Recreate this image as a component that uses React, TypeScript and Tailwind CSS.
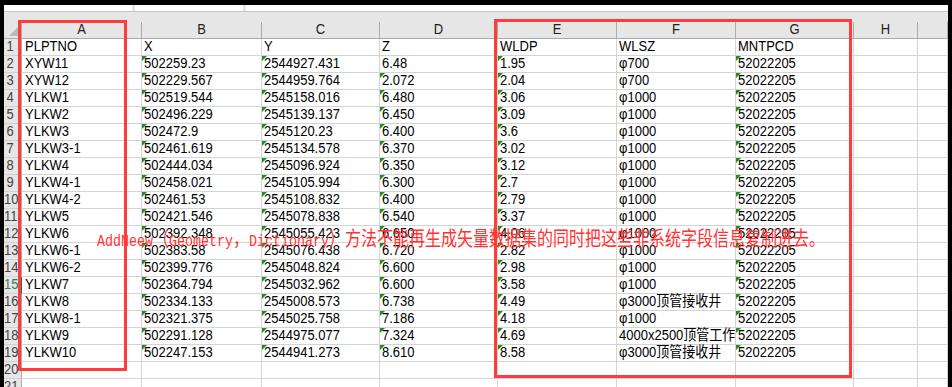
import React from 'react'

// sheet columns, A..H plus the clipped one at the right edge
const COLS = ['A', 'B', 'C', 'D', 'E', 'F', 'G', 'H', '']

const HEAD = ['PLPTNO', 'X', 'Y', 'Z', 'WLDP', 'WLSZ', 'MNTPCD']

const DATA: string[][] = [
  ['XYW11', '502259.23', '2544927.431', '6.48', '1.95', 'φ700', '52022205'],
  ['XYW12', '502229.567', '2544959.764', '2.072', '2.04', 'φ700', '52022205'],
  ['YLKW1', '502519.544', '2545158.016', '6.480', '3.06', 'φ1000', '52022205'],
  ['YLKW2', '502496.229', '2545139.137', '6.450', '3.09', 'φ1000', '52022205'],
  ['YLKW3', '502472.9', '2545120.23', '6.400', '3.6', 'φ1000', '52022205'],
  ['YLKW3-1', '502461.619', '2545134.578', '6.370', '3.02', 'φ1000', '52022205'],
  ['YLKW4', '502444.034', '2545096.924', '6.350', '3.12', 'φ1000', '52022205'],
  ['YLKW4-1', '502458.021', '2545105.994', '6.300', '2.7', 'φ1000', '52022205'],
  ['YLKW4-2', '502461.53', '2545108.832', '6.400', '2.79', 'φ1000', '52022205'],
  ['YLKW5', '502421.546', '2545078.838', '6.540', '3.37', 'φ1000', '52022205'],
  ['YLKW6', '502392.348', '2545055.423', '6.650', '4.06', 'φ1000', '52022205'],
  ['YLKW6-1', '502383.58', '2545076.438', '6.720', '2.82', 'φ1000', '52022205'],
  ['YLKW6-2', '502399.776', '2545048.824', '6.600', '2.98', 'φ1000', '52022205'],
  ['YLKW7', '502364.794', '2545032.962', '6.600', '3.58', 'φ1000', '52022205'],
  ['YLKW8', '502334.133', '2545008.573', '6.738', '4.49', 'φ3000顶管接收井', '52022205'],
  ['YLKW8-1', '502321.375', '2545025.758', '7.186', '4.18', 'φ1000', '52022205'],
  ['YLKW9', '502291.128', '2544975.077', '7.324', '4.69', '4000x2500顶管工作井', '52022205'],
  ['YLKW10', '502247.153', '2544941.273', '8.610', '8.58', 'φ3000顶管接收井', '52022205'],
]

const GRID = 'grid shrink-0 grid-cols-[18px_120px_120px_118px_118px_119px_119px_118px_64px_1fr]'

// numbers stored as text get the little green corner
const hasFlag = (row: number, col: number) => {
  if (row < 2 || row > 19) return false
  if (col === 1 || col === 2 || col === 4 || col === 6) return true
  if (col === 3) return row > 2
  return false
}

function Cell({ text, flag, col }: { text: string; flag: boolean; col: number }) {
  // only the long WLSZ value runs into the next filled cell and gets cut
  const clip = col === 5 && text.length > 12
  return (
    <div
      className={`relative h-[17px] whitespace-nowrap border-r border-b border-[#d4d4d4] bg-white text-black ${
        clip ? 'overflow-x-clip' : ''
      }`}
    >
      {flag && (
        <span className="absolute left-0 top-0 h-[5px] w-[5px] bg-[#1f8f1f] [clip-path:polygon(0_0,100%_0,0_100%)]" />
      )}
      <span className={`block origin-bottom scale-y-[1.12] leading-[16px] ${col === 0 ? 'pl-[3px]' : 'pl-[2px]'}`}>
        {text}
      </span>
    </div>
  )
}

function RowHead({ n }: { n: number }) {
  const active = n === 15
  return (
    <div
      className={`h-[17px] border-b border-[#d0d0d0] bg-[#e6e6e6] pr-[5px] text-center ${
        active ? 'border-r-2 border-r-[#217346] text-[#3a7a52]' : 'border-r border-r-[#ababab] text-[#444]'
      }`}
    >
      <span className="block origin-bottom scale-y-[1.12] leading-[16px]">{n}</span>
    </div>
  )
}

export default function App() {
  const rows: string[][] = [HEAD, ...DATA, [], []]

  return (
    <div className="relative h-[387px] w-[952px] overflow-hidden bg-black px-[4px] pt-[5px] font-['Liberation_Sans','Noto_Sans_CJK_SC',sans-serif] text-[13px]">
      <div className="flex h-full flex-col bg-[#e6e6e6]">
        {/* formula bar strip */}
        <div className="flex h-[7px] shrink-0 gap-[3px] border-b border-[#c6c6c6]">
          <div className="h-[6px] w-[128px] bg-white" />
          <div className="h-[6px] w-[108px] bg-white" />
          <div className="h-[6px] flex-1 bg-white" />
        </div>
        <div className="h-[10px] shrink-0" />

        {/* column headers */}
        <div className={GRID}>
          <div className="relative h-[17px] border-r border-b border-[#ababab] bg-[#e6e6e6]">
            <span className="absolute bottom-[2px] right-[2px] h-[10px] w-[10px] bg-[#b9b9b9] [clip-path:polygon(100%_0,100%_100%,0_100%)]" />
          </div>
          {COLS.map((c, i) => (
            <div key={i} className="h-[17px] border-r border-b border-[#ababab] bg-[#e6e6e6] text-center text-[#222]">
              <span className="block origin-center scale-y-[1.12] leading-[16px]">{c}</span>
            </div>
          ))}
        </div>

        {/* body */}
        <div className={GRID}>
          {rows.map((r, ri) => (
            <React.Fragment key={ri}>
              <RowHead n={ri + 1} />
              {COLS.map((_, ci) => (
                <Cell key={ci} text={r[ci] ?? ''} flag={hasFlag(ri + 1, ci)} col={ci} />
              ))}
            </React.Fragment>
          ))}
        </div>
      </div>

      {/* red annotation boxes */}
      <div className="pointer-events-none absolute left-[18px] top-[20px] h-[351px] w-[109px] border-[3px] border-[#ff3c3c]" />
      <div className="pointer-events-none absolute left-[494px] top-[19px] h-[359px] w-[358px] border-[3px] border-[#ff3c3c]" />

      {/* red note over the sheet */}
      <div className="pointer-events-none absolute left-[97px] top-[230px] origin-left scale-y-[1.25] whitespace-nowrap leading-[16px] text-[#ff3333]">
        <span className="font-['Liberation_Mono',monospace] text-[13.33px]">AddNeew</span>
        <span className="font-['Noto_Sans_CJK_SC',sans-serif] text-[16px]">（</span>
        <span className="font-['Liberation_Mono',monospace] text-[13.33px]">Geometry</span>
        <span className="font-['Noto_Sans_CJK_SC',sans-serif] text-[16px]">，</span>
        <span className="font-['Liberation_Mono',monospace] text-[13.33px]">Dictionary</span>
        <span className="font-['Noto_Sans_CJK_SC',sans-serif] text-[16px]">
          ）方法不能再生成矢量数据集的同时把这些非系统字段信息复制进去。
        </span>
      </div>
    </div>
  )
}
